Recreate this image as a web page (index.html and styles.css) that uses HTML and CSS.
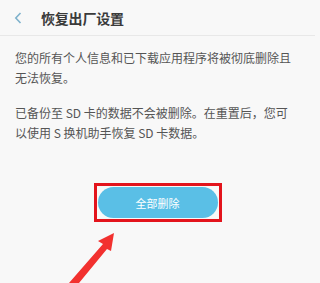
FILE: index.html
```html
<!DOCTYPE html>
<html lang="zh-CN">
<head>
<meta charset="utf-8">
<link rel="stylesheet" href="styles.css">
</head>
<body>
<div class="page">
  <header class="bar">
    <svg class="back" width="8" height="12" viewBox="0 0 8 12"><path d="M6.5 1 L1.8 6 L6.5 11" fill="none" stroke="#7fb2cc" stroke-width="1.6"/></svg>
    <span class="title">恢复出厂设置</span>
  </header>
  <main class="content">
    <p class="txt">您的所有个人信息和已下载应用程序将被彻底删除且无法恢复。</p>
    <p class="txt">已备份至 SD 卡的数据不会被删除。在重置后，您可以使用 S 换机助手恢复 SD 卡数据。</p>
    <div class="btnwrap">
      <div class="frame"><div class="btn">全部删除</div></div>
    </div>
  </main>
  <svg class="arrow" width="60" height="60" viewBox="0 0 60 60"><path d="M52 8 L36 16 L41 19 L7 58 L17 58 L45 24 L49 26 Z" fill="#f2312f"/></svg>
</div>
</body>
</html>
```
FILE: styles.css
```css
html, body { margin: 0; padding: 0; }
body { background: #f8f8f8; font-family: "Noto Sans CJK SC", "Noto Sans", sans-serif; }
.page { position: relative; width: 315px; height: 283px; overflow: hidden; }
.bar { height: 35px; border-bottom: 1px solid #e8e8e8; display: flex; align-items: center; padding-left: 14px; }
.back { margin-right: 19px; }
.title { font-size: 14px; font-weight: bold; color: #3a3a3a; letter-spacing: -0.2px; }
.content { padding: 12px 23px 0 15px; }
.txt { margin: 0 0 15px 0; font-size: 12px; line-height: 20px; color: #555; }
.btnwrap { display: flex; justify-content: center; margin-top: 40px; margin-left: -15px; margin-right: -23px; }
.frame { border: 3px solid #e3141c; padding: 1px; width: 120px; height: 31px; }
.btn { height: 31px; border-radius: 16px; background: #5abfe6; color: #fff; font-size: 11px; display: flex; align-items: center; justify-content: center; }
.arrow { position: absolute; left: 62px; top: 225px; }
```
